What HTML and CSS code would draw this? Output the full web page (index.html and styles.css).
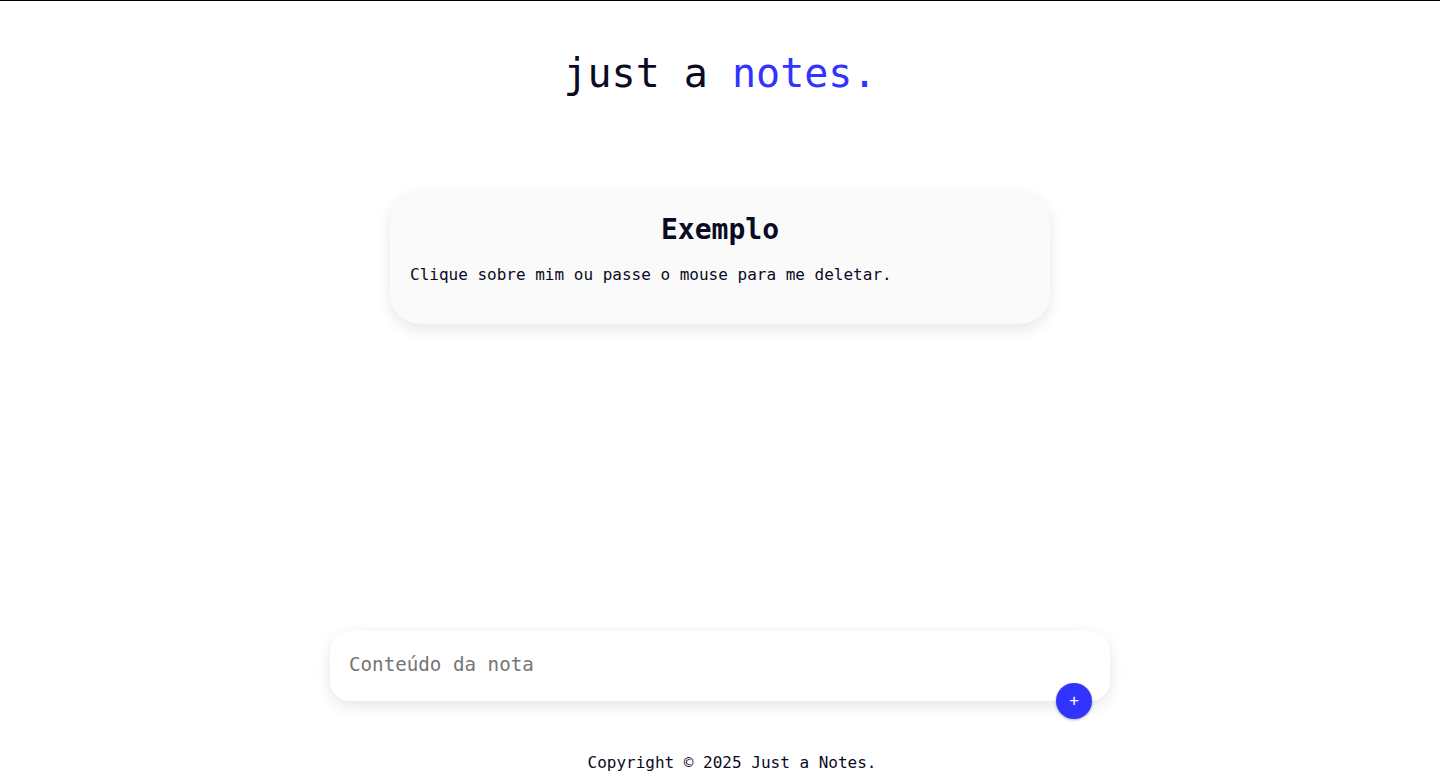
FILE: index.html
```html
<!DOCTYPE html>
<html lang="pt-BR">
<head>
<meta charset="utf-8">
<title>just a notes.</title>
<link rel="stylesheet" href="styles.css">
</head>
<body>
<div class="page">
  <header class="header">
    <h1 class="title">just a <span class="accent">notes.</span></h1>
  </header>
  <main class="notes">
    <article class="note">
      <h2 class="note-title">Exemplo</h2>
      <p class="note-text">Clique sobre mim ou passe o mouse para me deletar.</p>
    </article>
  </main>
  <form class="composer">
    <input class="composer-input" type="text" placeholder="Conteúdo da nota">
    <button class="composer-add" type="button">+</button>
  </form>
  <footer class="footer">Copyright © 2025 Just a Notes.</footer>
</div>
</body>
</html>
```
FILE: styles.css
```css
* { box-sizing: border-box; }
html, body { margin: 0; padding: 0; background: #fff; }
body {
  font-family: "DejaVu Sans Mono", "Liberation Mono", monospace;
  color: #0a0a23;
}
.page {
  min-height: 100vh;
  display: flex;
  flex-direction: column;
  border-top: 1px solid #000;
}
.header { padding-top: 49px; text-align: center; }
.title {
  margin: 0;
  font-size: 40px;
  line-height: 47px;
  font-weight: normal;
  color: #0a0a23;
}
.accent { color: #3333ff; }
.notes {
  flex: 1;
  display: flex;
  flex-direction: column;
  align-items: center;
  padding-top: 95px;
}
.note {
  width: 660px;
  background: #fafafa;
  border-radius: 30px;
  padding: 21px 20px 20px;
  box-shadow: 0 5px 15px rgba(0, 0, 0, 0.1);
}
.note-title {
  margin: 0 0 19px;
  text-align: center;
  font-size: 28px;
  font-weight: bold;
}
.note-text {
  margin: 0 0 20px;
  font-size: 16px;
}
.composer {
  position: relative;
  width: 780px;
  margin: 0 auto 52px;
}
.composer-input {
  display: block;
  width: 100%;
  height: 70px;
  border: none;
  outline: none;
  border-radius: 20px;
  background: #fff;
  padding: 0 19px 4px;
  font-family: inherit;
  font-size: 19.2px;
  color: #0a0a23;
  box-shadow: 0 5px 15px rgba(0, 0, 0, 0.1);
}
.composer-input::placeholder { color: #757575; }
.composer-add {
  position: absolute;
  right: 18px;
  bottom: -18px;
  width: 36px;
  height: 36px;
  border: none;
  border-radius: 50%;
  background: #3333ff;
  color: #fff;
  font-family: inherit;
  font-size: 16px;
  line-height: 36px;
  padding: 0;
  box-shadow: 0 1px 3px rgba(0, 0, 0, 0.3);
}
.footer {
  text-align: center;
  font-size: 16px;
  line-height: 19px;
  padding: 0 0 6px 24px;
}
```
